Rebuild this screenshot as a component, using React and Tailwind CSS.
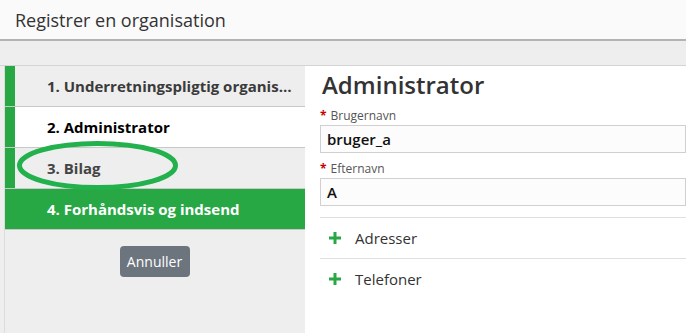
import React from "react";

function Plus() {
  return (
    <svg width="12" height="12" viewBox="0 0 12 12" className="shrink-0">
      <rect x="4.5" y="0" width="3" height="12" fill="#28a745" />
      <rect x="0" y="4.5" width="12" height="3" fill="#28a745" />
    </svg>
  );
}

export default function App() {
  return (
    <div
      className="relative w-[686px] h-[333px] overflow-hidden bg-[#eeeeee] text-[#333]"
      style={{ fontFamily: '"Open Sans", "Noto Sans", sans-serif' }}
    >
      <div className="h-[41px] bg-[#fafafa] border-b-2 border-[#b3b3b3] flex items-center pl-[15px]">
        <span className="text-[18px] text-[#333] leading-none">Registrer en organisation</span>
      </div>
      <div className="h-[24px]" />
      <div className="flex border-t border-[#d4d4d4] h-[268px]">
        <div className="ml-[4px] w-[301px] border-l border-[#dcdcdc] flex flex-col">
          <div className="flex h-[41px] border-b border-[#c8c8c8] bg-[#eeeeee]">
            <div className="w-[10px] bg-[#28a745]" />
            <div className="flex-1 min-w-0 pl-[32px] pr-[6px] flex items-center">
              <span className="truncate text-[15px] font-bold text-[#3a3a3a]">1. Underretningspligtig organisation</span>
            </div>
          </div>
          <div className="flex h-[41px] border-b border-[#c8c8c8] bg-white">
            <div className="w-[10px] bg-[#28a745]" />
            <div className="flex-1 pl-[32px] flex items-center">
              <span className="text-[15px] font-bold text-black">2. Administrator</span>
            </div>
          </div>
          <div className="flex h-[41px] border-b border-[#c8c8c8] bg-[#eeeeee]">
            <div className="w-[10px] bg-[#28a745]" />
            <div className="flex-1 pl-[32px] flex items-center">
              <span className="text-[15px] font-bold text-[#444]">3. Bilag</span>
            </div>
          </div>
          <div className="flex h-[41px] border-b border-[#c8c8c8] bg-[#28a745]">
            <div className="flex-1 pl-[42px] flex items-center">
              <span className="text-[15px] font-bold text-white">4. Forhåndsvis og indsend</span>
            </div>
          </div>
          <div className="flex justify-center pt-[16px] pr-[1px]">
            <button className="w-[70px] h-[31px] rounded-[4px] bg-[#6c757d] text-white text-[14px] flex items-center justify-center">
              Annuller
            </button>
          </div>
        </div>
        <div className="flex-1 bg-white pl-[15px]">
          <div className="text-[24px] font-semibold text-[#333] leading-none pt-[7px] pl-[2px]">Administrator</div>
          <div className="mt-[13px] text-[12px] leading-none text-[#555] flex items-center gap-[4px]">
            <span className="text-[#c00] font-bold">*</span>
            <span>Brugernavn</span>
          </div>
          <div className="mt-[3px] h-[28px] border border-[#d0d0d0] bg-[#fcfcfc] flex items-center pl-[6px]">
            <span className="text-[15px] font-semibold text-[#111]">bruger_a</span>
          </div>
          <div className="mt-[10px] text-[12px] leading-none text-[#555] flex items-center gap-[4px]">
            <span className="text-[#c00] font-bold">*</span>
            <span>Efternavn</span>
          </div>
          <div className="mt-[3px] h-[28px] border border-[#d0d0d0] bg-[#fcfcfc] flex items-center pl-[6px]">
            <span className="text-[15px] font-semibold text-[#111]">A</span>
          </div>
          <div className="mt-[11px] border-t border-[#e0e0e0] h-[41px] flex items-center pl-[9px] gap-[14px]">
            <Plus />
            <span className="text-[15px] text-[#333]">Adresser</span>
          </div>
          <div className="border-t border-[#e0e0e0] h-[41px] flex items-center pl-[9px] gap-[14px]">
            <Plus />
            <span className="text-[15px] text-[#333]">Telefoner</span>
          </div>
        </div>
      </div>
      <svg className="absolute left-0 top-0 pointer-events-none" width="686" height="333">
        <ellipse cx="97.5" cy="165.5" rx="78" ry="22" fill="none" stroke="#22b14c" strokeWidth="5" />
      </svg>
    </div>
  );
}
